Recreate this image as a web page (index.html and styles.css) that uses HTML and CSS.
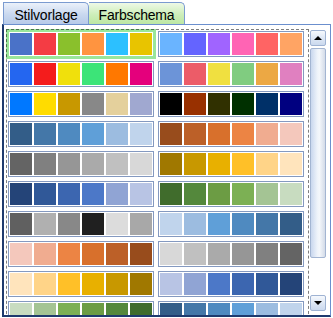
FILE: index.html
```html
<!DOCTYPE html>
<html>
<head>
<meta charset="utf-8">
<link rel="stylesheet" href="styles.css">
</head>
<body>
<div class="tabs">
  <div class="tab tab-style">Stilvorlage</div>
  <div class="tab tab-color">Farbschema</div>
</div>
<div class="panel">
  <div class="list">
    <div class="cell selected"><div class="box">
      <span class="sw" style="background:#4a72c8"></span><span class="sw" style="background:#f43c44"></span><span class="sw" style="background:#8ac02c"></span><span class="sw" style="background:#ff9440"></span><span class="sw" style="background:#2cc0ff"></span><span class="sw" style="background:#e8c400"></span>
    </div></div>
    <div class="cell"><div class="box">
      <span class="sw" style="background:#6ab4ff"></span><span class="sw" style="background:#6464ff"></span><span class="sw" style="background:#a064ff"></span><span class="sw" style="background:#ff64b4"></span><span class="sw" style="background:#ff6464"></span><span class="sw" style="background:#ffa464"></span>
    </div></div>

    <div class="cell"><div class="box">
      <span class="sw" style="background:#2466f0"></span><span class="sw" style="background:#f41c1c"></span><span class="sw" style="background:#f0e00c"></span><span class="sw" style="background:#3ce478"></span><span class="sw" style="background:#ff7800"></span><span class="sw" style="background:#e4007c"></span>
    </div></div>
    <div class="cell"><div class="box">
      <span class="sw" style="background:#6c94d8"></span><span class="sw" style="background:#ec5c68"></span><span class="sw" style="background:#f0e040"></span><span class="sw" style="background:#80cc80"></span><span class="sw" style="background:#eca844"></span><span class="sw" style="background:#e080c0"></span>
    </div></div>

    <div class="cell"><div class="box">
      <span class="sw" style="background:#0078ff"></span><span class="sw" style="background:#ffdc00"></span><span class="sw" style="background:#c89800"></span><span class="sw" style="background:#888888"></span><span class="sw" style="background:#e4d09c"></span><span class="sw" style="background:#a0a8d0"></span>
    </div></div>
    <div class="cell"><div class="box">
      <span class="sw" style="background:#000000"></span><span class="sw" style="background:#983000"></span><span class="sw" style="background:#303000"></span><span class="sw" style="background:#003000"></span><span class="sw" style="background:#003068"></span><span class="sw" style="background:#000080"></span>
    </div></div>

    <div class="cell"><div class="box">
      <span class="sw" style="background:#335d88"></span><span class="sw" style="background:#4477a8"></span><span class="sw" style="background:#4f8ac0"></span><span class="sw" style="background:#5f9fd8"></span><span class="sw" style="background:#9cbce0"></span><span class="sw" style="background:#c0d4ec"></span>
    </div></div>
    <div class="cell"><div class="box">
      <span class="sw" style="background:#984c1c"></span><span class="sw" style="background:#bc6028"></span><span class="sw" style="background:#d8702c"></span><span class="sw" style="background:#ec8444"></span><span class="sw" style="background:#f0ac90"></span><span class="sw" style="background:#f4c8bc"></span>
    </div></div>

    <div class="cell"><div class="box">
      <span class="sw" style="background:#646464"></span><span class="sw" style="background:#808080"></span><span class="sw" style="background:#969696"></span><span class="sw" style="background:#aaaaaa"></span><span class="sw" style="background:#c0c0c0"></span><span class="sw" style="background:#d8d8d8"></span>
    </div></div>
    <div class="cell"><div class="box">
      <span class="sw" style="background:#a07800"></span><span class="sw" style="background:#c89800"></span><span class="sw" style="background:#e8b000"></span><span class="sw" style="background:#ffc028"></span><span class="sw" style="background:#ffd488"></span><span class="sw" style="background:#ffe4bc"></span>
    </div></div>

    <div class="cell"><div class="box">
      <span class="sw" style="background:#244478"></span><span class="sw" style="background:#305898"></span><span class="sw" style="background:#3c66b0"></span><span class="sw" style="background:#4c78c8"></span><span class="sw" style="background:#90a4d4"></span><span class="sw" style="background:#b8c4e4"></span>
    </div></div>
    <div class="cell"><div class="box">
      <span class="sw" style="background:#406c2c"></span><span class="sw" style="background:#54883c"></span><span class="sw" style="background:#6c9c44"></span><span class="sw" style="background:#7cb054"></span><span class="sw" style="background:#a4c494"></span><span class="sw" style="background:#c8dcc0"></span>
    </div></div>

    <div class="cell"><div class="box">
      <span class="sw" style="background:#606060"></span><span class="sw" style="background:#b0b0b0"></span><span class="sw" style="background:#888888"></span><span class="sw" style="background:#202020"></span><span class="sw" style="background:#dcdcdc"></span><span class="sw" style="background:#a8a8a8"></span>
    </div></div>
    <div class="cell"><div class="box">
      <span class="sw" style="background:#c0d4ec"></span><span class="sw" style="background:#9cbce0"></span><span class="sw" style="background:#5f9fd8"></span><span class="sw" style="background:#4f8ac0"></span><span class="sw" style="background:#4477a8"></span><span class="sw" style="background:#335d88"></span>
    </div></div>

    <div class="cell"><div class="box">
      <span class="sw" style="background:#f4c8bc"></span><span class="sw" style="background:#f0ac90"></span><span class="sw" style="background:#ec8444"></span><span class="sw" style="background:#d8702c"></span><span class="sw" style="background:#bc6028"></span><span class="sw" style="background:#984c1c"></span>
    </div></div>
    <div class="cell"><div class="box">
      <span class="sw" style="background:#d8d8d8"></span><span class="sw" style="background:#c0c0c0"></span><span class="sw" style="background:#aaaaaa"></span><span class="sw" style="background:#969696"></span><span class="sw" style="background:#808080"></span><span class="sw" style="background:#646464"></span>
    </div></div>

    <div class="cell"><div class="box">
      <span class="sw" style="background:#ffe4bc"></span><span class="sw" style="background:#ffd488"></span><span class="sw" style="background:#ffc028"></span><span class="sw" style="background:#e8b000"></span><span class="sw" style="background:#c89800"></span><span class="sw" style="background:#a07800"></span>
    </div></div>
    <div class="cell"><div class="box">
      <span class="sw" style="background:#b8c4e4"></span><span class="sw" style="background:#90a4d4"></span><span class="sw" style="background:#4c78c8"></span><span class="sw" style="background:#3c66b0"></span><span class="sw" style="background:#305898"></span><span class="sw" style="background:#244478"></span>
    </div></div>

    <div class="cell"><div class="box">
      <span class="sw" style="background:#c8dcc0"></span><span class="sw" style="background:#a4c494"></span><span class="sw" style="background:#7cb054"></span><span class="sw" style="background:#6c9c44"></span><span class="sw" style="background:#54883c"></span><span class="sw" style="background:#406c2c"></span>
    </div></div>
    <div class="cell"><div class="box">
      <span class="sw" style="background:#335d88"></span><span class="sw" style="background:#4477a8"></span><span class="sw" style="background:#4f8ac0"></span><span class="sw" style="background:#5f9fd8"></span><span class="sw" style="background:#9cbce0"></span><span class="sw" style="background:#c0d4ec"></span>
    </div></div>
  </div>
  <div class="scrollbar">
    <div class="sbtn"><span class="arrow up"></span></div>
    <div class="thumb"></div>
    <div class="track"></div>
    <div class="sbtn"><span class="arrow down"></span></div>
  </div>
</div>
</body>
</html>
```

FILE: styles.css
```css
html, body {
  margin: 0;
  padding: 0;
  background: #ffffff;
}
body {
  width: 333px;
  height: 318px;
  overflow: hidden;
  font-family: "Liberation Sans", Arial, sans-serif;
}
.tabs {
  display: flex;
  align-items: flex-end;
  height: 24px;
  padding-left: 3px;
  box-sizing: border-box;
}
.tab {
  box-sizing: border-box;
  height: 22px;
  border: 1px solid #7b9bd0;
  border-bottom: none;
  border-top-right-radius: 5px;
  font-size: 14px;
  letter-spacing: -0.2px;
  color: #000;
  display: flex;
  align-items: center;
  justify-content: center;
  padding-top: 2px;
}
.tab-style {
  width: 86px;
  background: linear-gradient(#ebf1fa, #c9d8ef 55%, #b7cae8);
}
.tab-color {
  width: 96px;
  border-left: none;
  background: linear-gradient(#eef9e6, #cdeeb9 55%, #bde7a3);
}
.panel {
  box-sizing: border-box;
  margin-left: 2px;
  width: 329px;
  height: 293px;
  border-top: 1px solid #6b8fce;
  border-right: 1px solid #6b8fce;
  border-left: 2px solid #1e3a6e;
  border-bottom: 2px solid #1e3a6e;
  padding: 4px 0 0 2px;
  display: flex;
  align-items: stretch;
}
.list {
  position: relative;
  width: 303px;
  overflow: hidden;
  display: grid;
  grid-template-columns: 150px 150px;
  grid-auto-rows: 30px;
  align-content: start;
}
.list::after {
  content: "";
  position: absolute;
  left: 0;
  top: 0;
  right: 0;
  bottom: -4px;
  border: 1px dashed rgba(0, 0, 0, 0.5);
  pointer-events: none;
}
.cell {
  padding: 2px;
  box-sizing: border-box;
}
.box {
  box-sizing: border-box;
  width: 146px;
  height: 26px;
  border: 1px solid #8499c0;
  padding: 1px;
  background: #fff;
  display: flex;
  gap: 2px;
}
.sw {
  display: block;
  width: 22px;
  height: 22px;
}
.cell.selected {
  background: #9ae69a;
}
.cell.selected .box {
  border-color: #9ae69a;
}
.scrollbar {
  margin: 1px 4px 4px 1px;
  width: 16px;
  display: flex;
  flex-direction: column;
}
.sbtn {
  box-sizing: border-box;
  width: 16px;
  height: 16px;
  border: 1px solid #9fb3d3;
  border-radius: 2px;
  background: linear-gradient(#f6f9fd, #dfe8f5 50%, #cbd9ee);
  display: flex;
  align-items: center;
  justify-content: center;
}
.arrow {
  width: 0;
  height: 0;
  border-left: 4px solid transparent;
  border-right: 4px solid transparent;
}
.arrow.up {
  border-bottom: 4px solid #000;
}
.arrow.down {
  border-top: 4px solid #000;
}
.thumb {
  box-sizing: border-box;
  margin-top: 2px;
  height: 210px;
  border: 1px solid #a3b5d2;
  border-radius: 2px;
  background: linear-gradient(90deg, #c9d7ee, #eef3fa 45%, #f4f7fb 60%, #d3dbe8);
}
.track {
  flex: 1;
}
```
